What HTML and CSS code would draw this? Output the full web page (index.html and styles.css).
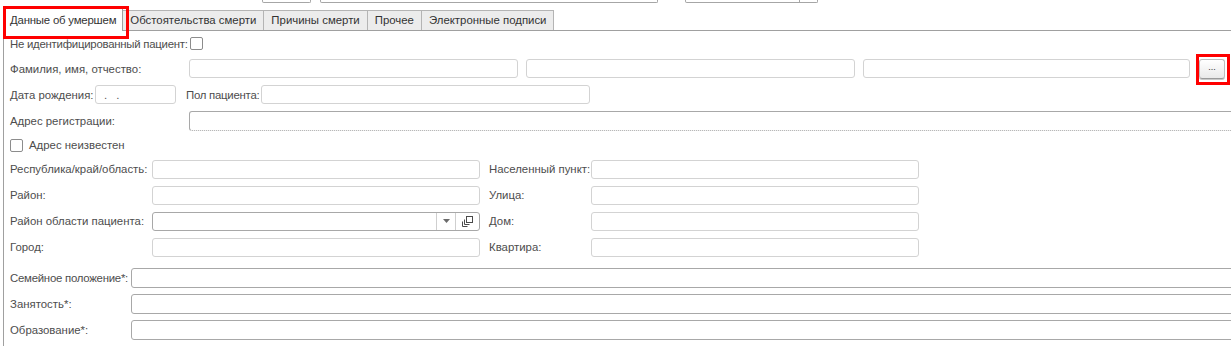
FILE: index.html
```html
<!DOCTYPE html>
<html lang="ru">
<head>
<meta charset="UTF-8" />
<meta name="viewport" content="width=device-width, initial-scale=1" />
<title>Данные об умершем</title>
<link rel="stylesheet" href="styles.css">
</head>
<body>
<div class="screen">
  <!-- bottom edges of the fields above, cut by the screenshot -->
  <div class="stubs">
    <span class="stub stub-a"></span>
    <span class="stub stub-b"></span>
    <span class="stub stub-c"><span class="stub-btn"></span></span>
  </div>

  <nav class="tabs">
    <div class="tab active">Данные об умершем</div>
    <div class="tab">Обстоятельства смерти</div>
    <div class="tab">Причины смерти</div>
    <div class="tab">Прочее</div>
    <div class="tab">Электронные подписи</div>
  </nav>

  <section class="panel">
    <div class="row r1">
      <span class="lbl w-unknown tight">Не идентифицированный пациент:</span>
      <span class="check"></span>
    </div>

    <div class="row r2">
      <span class="lbl w-fio">Фамилия, имя, отчество:</span>
      <span class="field fio"></span>
      <span class="field fio"></span>
      <span class="field fio last"></span>
      <button class="dots" type="button">...</button>
    </div>

    <div class="row r3">
      <span class="lbl w-date">Дата рождения:</span>
      <span class="field date"><span class="mask">. .</span></span>
      <span class="lbl w-sex tight">Пол пациента:</span>
      <span class="field sex"></span>
    </div>

    <div class="row r4">
      <span class="lbl w-fio">Адрес регистрации:</span>
      <span class="field dark wide required"></span>
    </div>

    <div class="row r5">
      <span class="check"></span>
      <span class="lbl check-lbl">Адрес неизвестен</span>
    </div>

    <div class="addr">
      <div class="row">
        <span class="lbl w-left">Республика/край/область:</span>
        <span class="field half"></span>
        <span class="lbl w-right">Населенный пункт:</span>
        <span class="field half"></span>
      </div>
      <div class="row">
        <span class="lbl w-left">Район:</span>
        <span class="field half"></span>
        <span class="lbl w-right">Улица:</span>
        <span class="field half"></span>
      </div>
      <div class="row">
        <span class="lbl w-left">Район области пациента:</span>
        <span class="field half dark combo">
          <span class="combo-btn">
            <svg width="7" height="4" viewBox="0 0 7 4"><path d="M0 0h7L3.5 4z" fill="#6b6b6b"/></svg>
          </span>
          <span class="combo-btn">
            <svg width="11" height="11" viewBox="0 0 11 11" fill="none" stroke="#4a4a4a" stroke-width="1">
              <rect x="4.5" y="0.5" width="6" height="6"/>
              <path d="M2.5 3.5v5h5M0.5 5.5v5h5"/>
            </svg>
          </span>
        </span>
        <span class="lbl w-right">Дом:</span>
        <span class="field half"></span>
      </div>
      <div class="row">
        <span class="lbl w-left">Город:</span>
        <span class="field half"></span>
        <span class="lbl w-right">Квартира:</span>
        <span class="field half"></span>
      </div>
    </div>

    <div class="extra">
      <div class="row">
        <span class="lbl w-extra tight">Семейное положение*:</span>
        <span class="field dark long"></span>
      </div>
      <div class="row">
        <span class="lbl w-extra">Занятость*:</span>
        <span class="field dark long"></span>
      </div>
      <div class="row">
        <span class="lbl w-extra">Образование*:</span>
        <span class="field dark long"></span>
      </div>
    </div>
  </section>

  <!-- red annotation frames -->
  <div class="mark mark-tab"></div>
  <div class="mark mark-btn"></div>
</div>
</body>
</html>
```

FILE: styles.css
```css
:root {
  --text: #4d4d4d;
  --tab-text: #333333;
  --line: #a0a0a0;
  --field-border: #d3d3d3;
  --field-dark: #a8a8a8;
  --tab-bg: #ececec;
  --mark: #ff0000;
}
* {
  box-sizing: border-box;
}
html, body {
  margin: 0;
  background: #ffffff;
}
body {
  width: 1231px;
  height: 346px;
  overflow: hidden;
  font-family: "Liberation Sans", Arial, sans-serif;
  font-size: 11.4px;
  color: var(--text);
}
.screen {
  position: relative;
  width: 1231px;
  height: 346px;
  overflow: hidden;
}

/* cut-off fields at the very top */
.stubs {
  display: flex;
  height: 8px;
}
.stub {
  height: 3px;
  border: 1px solid #a6a6a6;
  border-top: none;
  border-radius: 0 0 2px 2px;
}
.stub-a {
  margin-left: 262px;
  width: 49px;
}
.stub-b {
  margin-left: 9px;
  width: 338px;
}
.stub-c {
  margin-left: 27px;
  width: 133px;
  display: flex;
  justify-content: flex-end;
}
.stub-btn {
  width: 18px;
  border-left: 1px solid #a6a6a6;
}

/* tabs */
.tabs {
  display: flex;
  align-items: flex-end;
  height: 22px;
  margin-left: 3px;
}
.tab {
  height: 20px;
  line-height: 19px;
  padding: 0 7px;
  background: var(--tab-bg);
  border: 1px solid #b4b4b4;
  border-bottom: none;
  border-left: none;
  color: var(--tab-text);
  white-space: nowrap;
}
.tab.active {
  position: relative;
  z-index: 1;
  height: 23px;
  margin-bottom: -1px;
  line-height: 22px;
  padding: 0 6px;
  letter-spacing: -0.2px;
  background: #ffffff;
  border: 1px solid var(--line);
  border-bottom: none;
}

/* panel */
.panel {
  margin-left: 3px;
  padding-left: 6px;
  border-top: 1px solid var(--line);
  border-left: 1px solid var(--line);
  height: 320px;
}
.row {
  display: flex;
  align-items: center;
  height: 26px;
  white-space: nowrap;
}
.r1 { height: 25px; }
.r2 { height: 25px; }
.r3 { height: 27px; }
.r4 { height: 26px; }
.r5 { height: 22px; }

.lbl {
  flex: none;
  line-height: 14px;
}
.tight { letter-spacing: -0.25px; }
.w-unknown { width: 180px; }
.w-fio { width: 179px; }
.w-date { width: 85px; }
.w-sex { width: 75px; margin-left: 10px; }
.w-left { width: 142px; }
.w-right { width: 102px; margin-left: 9px; }
.w-extra { width: 121px; }
.check-lbl { margin-left: 6px; }

.check {
  flex: none;
  width: 13px;
  height: 13px;
  border: 1px solid #8c8c8c;
  border-radius: 2px;
  background: #ffffff;
}

/* input fields */
.field {
  flex: none;
  display: flex;
  align-items: center;
  height: 19px;
  border: 1px solid var(--field-border);
  border-radius: 3px;
  background: #ffffff;
}
.field.dark {
  border-color: var(--field-dark);
}
.fio {
  width: 329px;
  margin-right: 8px;
}
.fio.last {
  width: 327px;
  margin-right: 9px;
}
.date { width: 81px; }
.sex { width: 329px; }
.wide {
  width: 1060px;
  height: 20px;
}
.required {
  border-bottom: 1px dotted #e00000;
}
.half { width: 328px; }
.long {
  width: 1120px;
  height: 20px;
}
.mask {
  padding-left: 8px;
  letter-spacing: 3px;
  color: #555555;
  line-height: 12px;
}

/* combo box buttons */
.combo {
  justify-content: flex-end;
}
.combo-btn {
  display: flex;
  align-items: center;
  justify-content: center;
  width: 19px;
  height: 100%;
  border-left: 1px solid #cfcfcf;
}
.combo-btn + .combo-btn {
  width: 24px;
}

/* "..." button */
.dots {
  flex: none;
  width: 26px;
  height: 20px;
  padding: 0 0 3px;
  border: 1px solid #bdbdbd;
  border-bottom-color: #9a9a9a;
  border-radius: 3px;
  background: linear-gradient(#ffffff, #e9e9e9);
  box-shadow: 0 1px 0 #c8c8c8;
  font-family: "Liberation Sans", Arial, sans-serif;
  font-size: 9px;
  color: #333333;
  line-height: 10px;
}

.extra {
  margin-top: 5px;
}

/* red highlight frames drawn over the form */
.mark {
  position: absolute;
  border: 3px solid var(--mark);
  z-index: 2;
}
.mark-tab {
  left: 3px;
  top: 6px;
  width: 126px;
  height: 33px;
}
.mark-btn {
  left: 1196px;
  top: 54px;
  width: 34px;
  height: 31px;
}
```
